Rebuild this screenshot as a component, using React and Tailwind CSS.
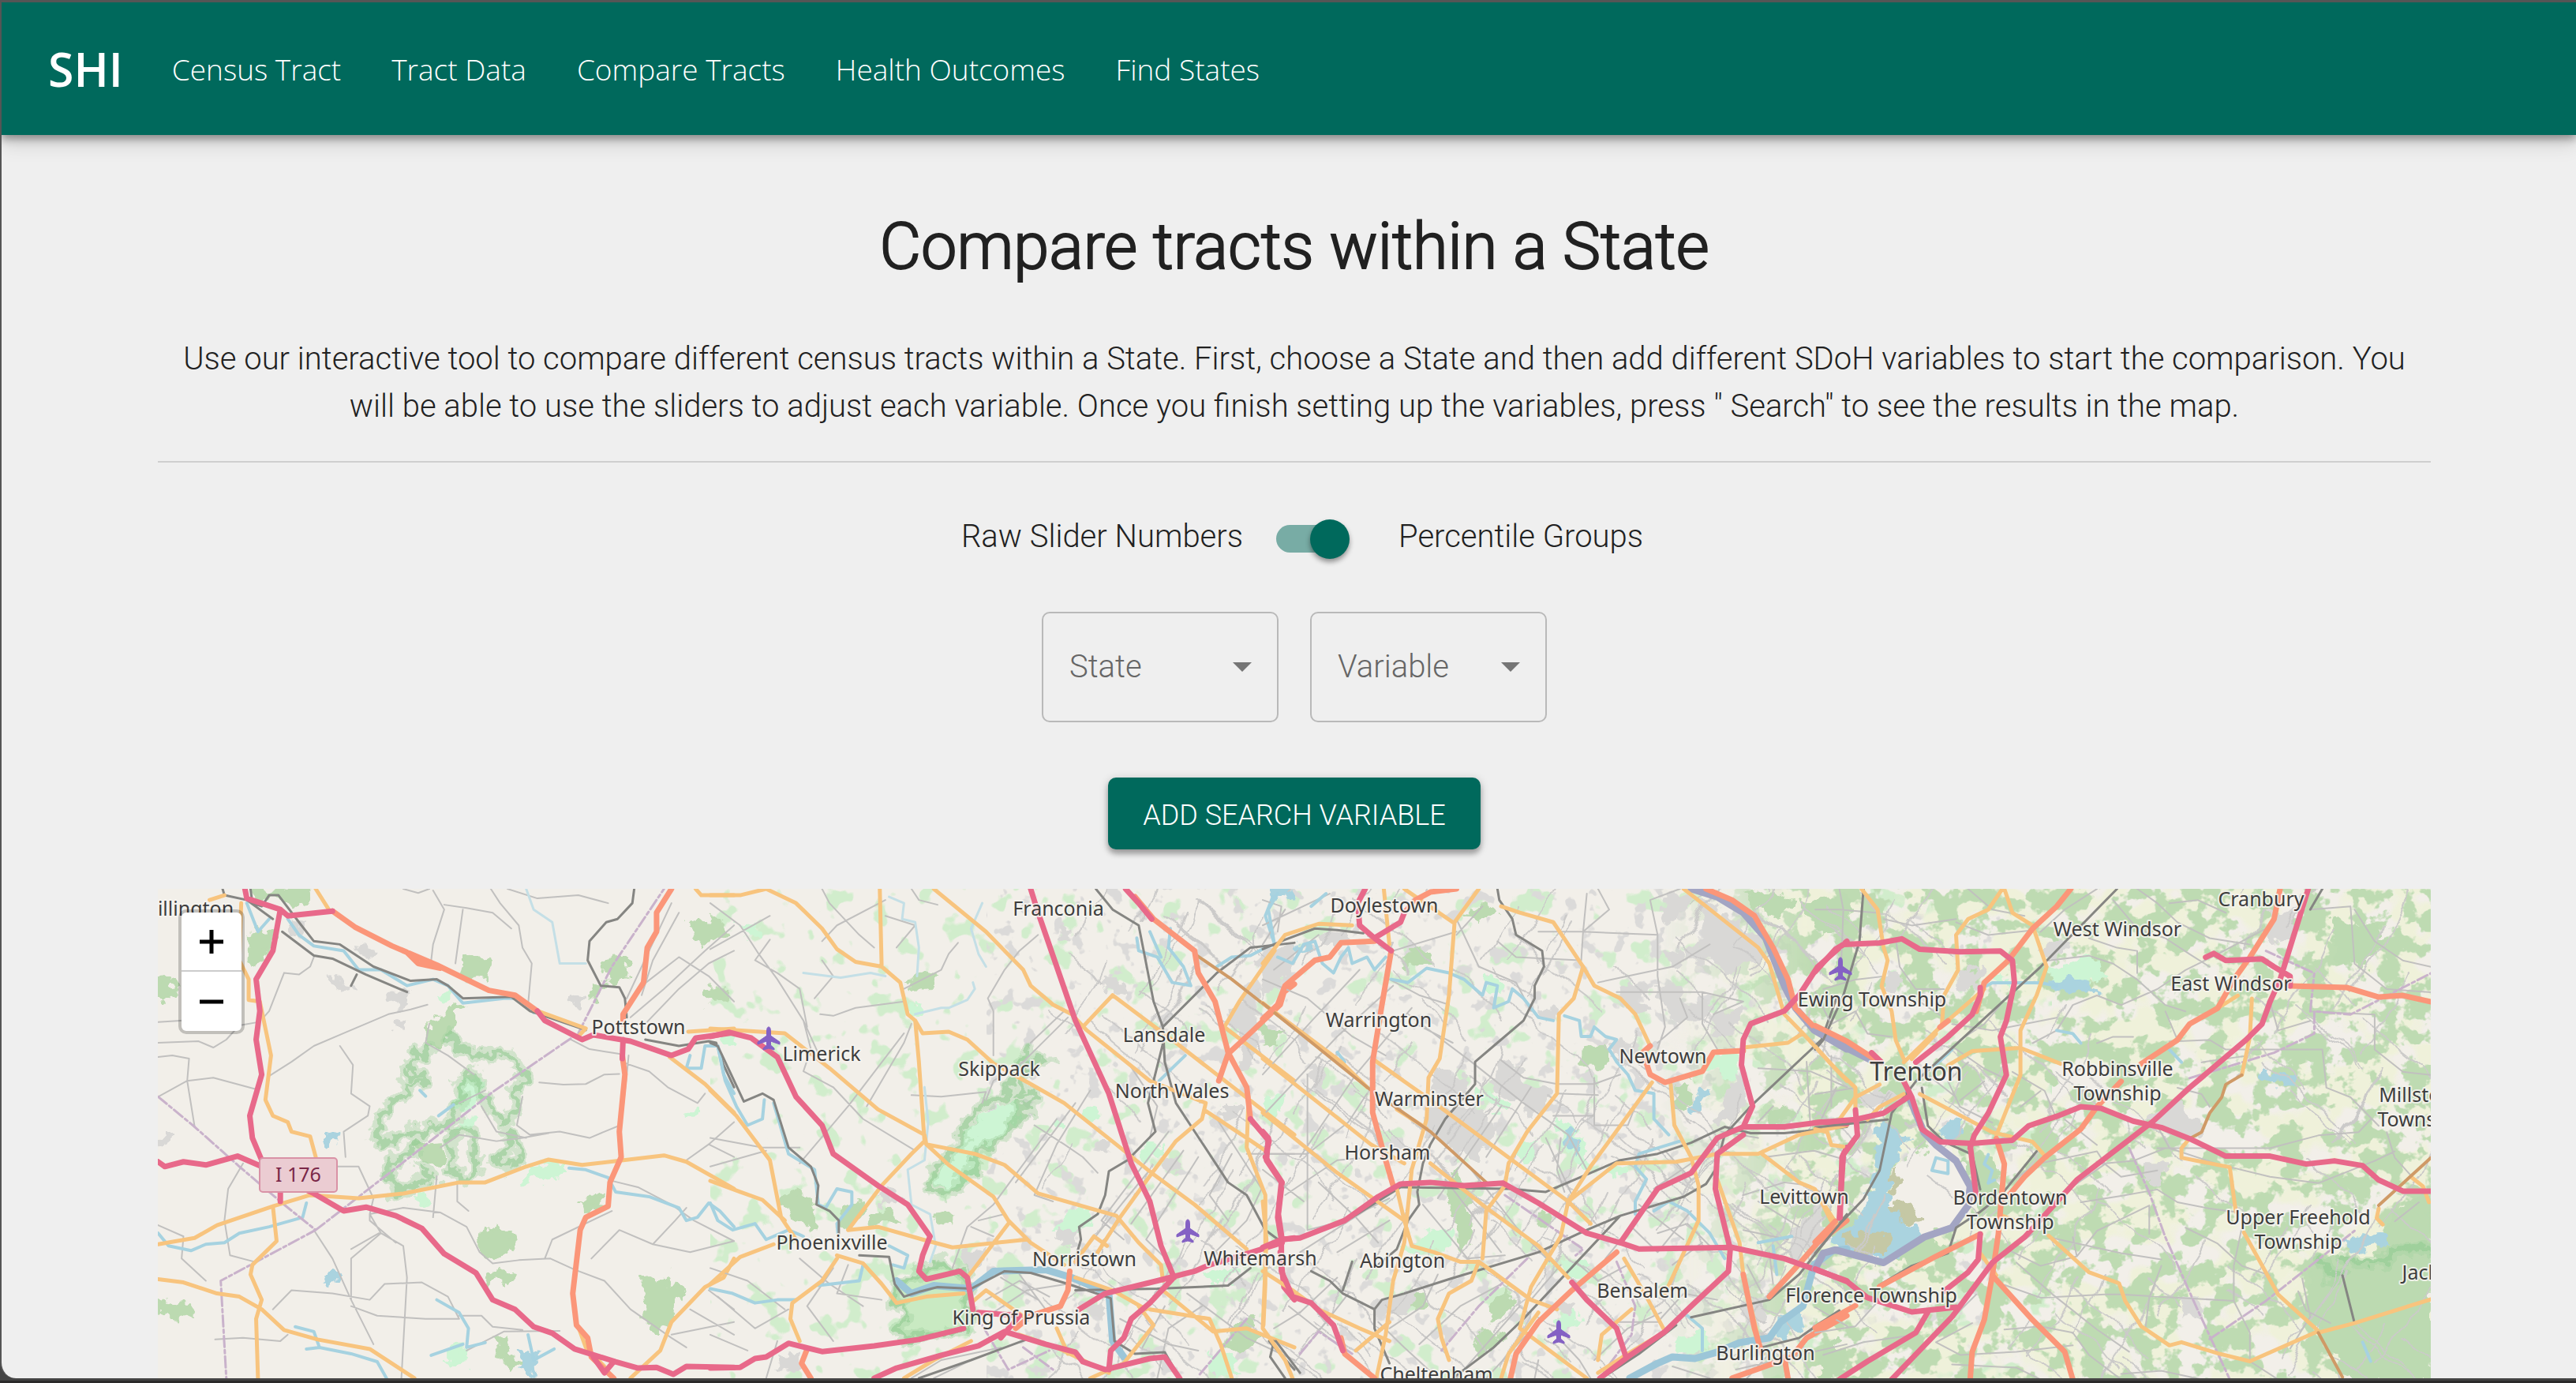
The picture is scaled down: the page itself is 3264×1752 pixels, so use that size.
import { useState } from "react";

const NAV = ["Census Tract", "Tract Data", "Compare Tracts", "Health Outcomes", "Find States"];

// Each map sheet holds its own local grid; strokes keep a constant width.
const SHEETS = [
  {
    place: "translate(-10 -6) scale(0.472 0.402)",
    woods: [
      "M270 15H420L410 60 380 85 340 25 290 60Z", "M255 160L330 150 325 190 285 260 262 220Z", "M850 235L910 232 918 262 908 300 842 285Z",
      "M820 375L845 380 815 430 800 490 750 508 752 440 790 415Z", "M22 300L50 295 70 330 50 365 22 360Z", "M1220 235L1275 232 1290 290 1230 320 1215 280Z",
      "M1485 335L1530 320 1550 345 1500 375Z", "M1160 1000L1215 978 1222 998 1165 1020Z", "M895 1100L925 1082 970 1098 978 1150 920 1190 885 1160Z",
      "M905 1245L935 1208 978 1240 955 1250 940 1240 910 1275Z", "M1325 1230L1360 1255 1390 1220 1400 1270 1445 1285 1400 1320 1415 1370 1370 1420 1340 1405 1350 1370 1322 1370 1345 1320 1320 1280Z",
      "M22 1310L60 1320 112 1322 105 1355 70 1378 40 1345 22 1340Z", "M920 1430L955 1430 960 1490 1000 1515 970 1525 940 1480Z", "M715 820L780 815 785 880 740 875Z", "M1450 130L1540 110 1545 150 1480 190Z", "M1180 330L1220 320 1205 360 1175 355Z",
    ],
    edges: [
      "M750 508L735 540 710 530 715 560 695 580 700 605 740 600 738 620 690 630 695 660 650 685 620 730 625 770 605 790 625 820 670 800 690 775 730 790 745 765 790 770 815 740 825 700 840 685 830 640 845 610 870 605 885 640 905 670 920 720 945 755 970 740 980 690 990 620 1015 610 980 550 950 530 905 535 880 555 850 515 820 510 800 480",
      "M720 820L700 850 660 870 630 915 655 935 665 970 710 945 760 920 730 890", "M805 780L870 785 875 900 845 935 810 900Z", "M965 790L985 800 995 870 955 890 920 865 950 850Z",
    ],
    golf: ["M830 625L880 605 905 665 885 690 840 710 822 690Z", "M835 740L870 735 865 770 835 775Z", "M1025 890L1110 880 1118 915 1040 925 1003 938Z", "M800 1465L845 1460 842 1520 800 1515Z", "M700 985L740 975 750 1010 695 1005Z", "M1440 730L1470 705 1482 720 1445 740Z", "M775 345L800 335 805 360 785 365Z", "M1540 480L1568 480 1568 510 1545 505Z"],
    gray: ["M480 295L520 305 545 330 520 338 500 325Z", "M640 345L690 340 700 370 665 380 640 375Z", "M655 430L688 430 685 455 660 458Z", "M1130 365L1158 362 1155 392 1130 388Z", "M30 790L55 790 50 825 32 820Z", "M380 110L415 130 400 160 375 145Z", "M560 190L600 205 590 240 560 225Z"],
    lake: ["M460 800L475 785 495 800 500 810 470 822Z", "M456 1240L490 1222 510 1240 480 1266Z", "M990 1455L1015 1490 1045 1475 1030 1550 1000 1530Z"],
    minor: [
      "M22 435L90 430 M22 500L130 495 170 515 205 490 240 445 290 435", "M22 545L60 540 105 550 100 620 22 670", "M100 620L170 610 280 645", "M100 620L120 765",
      "M320 605L380 560 440 510 520 470 560 450 640 410 700 395 745 380", "M510 510L545 570 540 660 590 700 585 730 520 780 525 860", "M360 280L400 285 430 260 440 230 M360 280L320 400 305 420",
      "M755 240L760 190 790 80 760 20 M790 65L850 75 920 90 970 140 M820 250L840 80", "M915 15L940 60 990 130 1000 200 1025 250 1015 380", "M680 15L720 28 750 15 M960 15L1040 45 1150 35 1230 60",
      "M250 880L210 960 200 1060 215 1170 280 1190", "M22 1075L90 1110 85 1180 150 1250", "M500 890L560 890 600 990 590 1040 620 1100 680 1140 690 1240 675 1557",
      "M620 1100L540 1180 540 1310 600 1450 M615 1100L540 1150 M440 1090L490 1180 540 1310", "M590 1040L680 1020 780 1035 850 1080 885 1160 920 1195 990 1185 1075 1180 1140 1215 1220 1250 1290 1340 1400 1430 1440 1460",
      "M760 1050L770 920 M825 945L825 1000 855 1030", "M1045 625L1110 632 1170 630 1220 600 1260 598", "M1000 670L985 760 1020 790 1100 780 1180 800 1220 780 1262 760", "M870 600L800 540 740 500 750 440", "M830 690L900 650 M890 700L930 780 1010 800", "M780 830L830 790 930 810 1000 800 1070 785",
      "M1060 1180L1080 1120 1240 1030 M1185 1180L1260 1090 1350 1135 1450 1160 1568 1125", "M1350 1135L1410 1060 1440 1020", "M1240 935L1310 955 1400 1010 1460 1060 1568 1125", "M330 1340L380 1280 490 1290 590 1310 630 1260 730 1255 800 1300 830 1370 740 1370 610 1360 540 1330 M830 1360L890 1360 920 1395 1000 1405",
      "M850 1470L900 1440 950 1410 1100 1408 M175 1435L250 1430 350 1440 370 1420", "M1265 560L1340 590 1390 640 1470 690 1490 660", "M1568 370L1500 290 1420 230 1310 330", "M1290 420L1380 330 1490 210 1568 130 M1330 440L1420 330 1500 250 1568 210", "M1280 360L1400 60 M1320 350L1350 240 1420 90", "M1130 490L1180 520 1260 535", "M1285 540L1280 600 1265 760", "M1500 820L1568 860 M1568 750L1500 820 1440 870", "M1400 1420L1568 1380 M1450 1340L1568 1420 M1500 1280L1568 1340", "M590 1040L590 1060 660 1130",
    ],
    stream: ["M370 110L400 160 440 195 520 210 560 270 620 270 690 320 760 300 800 320 840 375 950 360 990 360 1030 405", "M260 60L290 150 320 110", "M22 1100L50 1140 110 1155 150 1135 200 1130 240 1100 320 1080 410 1050 420 1005", "M1125 895L1170 900 1230 925 1250 970 1340 985 1420 1020 1440 1060 1470 1050 1500 1005 1530 1030 1568 1080", "M390 1395L440 1410 455 1460 540 1480 610 1505 635 1557 M455 1460L420 1465", "M770 1310L830 1350 855 1400 850 1460 900 1445", "M755 1485L840 1450", "M1450 540L1440 580 1480 580 1490 510 1525 510 1540 600 1568 660", "M775 730L815 695 M725 650L740 668", "M1085 1465L1030 1500 1015 1420"],
    brook: ["M1010 15L1030 80 1080 120 1100 250 1170 250"],
    rail: ["M195 15L200 35 260 50 330 110 M270 15L275 60 300 70 320 35 345 35 400 120 440 180 510 190 600 260 700 305 770 300 800 320 840 360 970 355 1020 400 1170 460", "M355 150L440 225 490 235 580 285 690 340", "M540 320L555 285", "M1300 15L1295 60 1255 110 1225 120 1180 180 1175 240 1210 320 1260 325 1275 360 1280 420", "M1330 490L1420 510 1500 495 1520 500 1540 570 1568 640"],
    border: ["M22 670L120 765 240 890 360 1010 445 1090 190 1250 205 1557", "M445 1090L720 840 920 655 1150 470 1240 260 1380 15"],
    road2: ["M445 15L480 80", "M245 60L240 240 265 300 265 365 295 370 325 540 310 680 330 730 370 750 380 780 430 795 445 860", "M22 1135L120 1115 180 1075 330 1015 430 980 560 990 680 975 830 940 900 940 1010 890 1070 868 1160 885 1380 855 1440 875 1568 960", "M330 1015L340 1125 275 1200 270 1230 300 1310 285 1370 290 1557", "M22 1245L90 1255 180 1290 240 1300 300 1340 360 1405 450 1435 590 1465 710 1557", "M1030 395L1170 455 1150 480", "M1395 545L1490 630 1568 720", "M1568 1180L1540 1240 1490 1270 1400 1380 1370 1470 1290 1557", "M1150 1395L1170 1460 1220 1520", "M1465 15L1480 35 1568 35", "M1445 465L1568 455", "M160 50L200 35"],
    trunk: ["M490 85L550 135 650 195 770 255 910 335 980 350 1040 400", "M690 215L720 250 780 265", "M1400 15L1360 90 1360 150 1335 200 1325 310 1270 410 1270 440", "M1268 540L1275 600 1260 780 1265 860 1235 940 1230 1015 1170 1050 1155 1090 1135 1290 1145 1390 1175 1430 1185 1490 1245 1557"],
    motor: ["M255 15L260 45 350 80 370 100 490 85", "M350 80L330 210 285 300 295 400 285 490 300 600 268 730 275 800 300 870 350 950 350 1000", "M22 875L40 890 90 875 150 885 235 857 300 890 360 930 440 975 520 1030 580 1018 660 1045 730 1085 790 1165 875 1225 920 1310 980 1340 1030 1395 1080 1415 1140 1465 1250 1505 1310 1525 1360 1523 1405 1545 1440 1520 1568 1523", "M1040 400L1060 430 1160 490 1190 475 1290 495 1400 540 1445 520 1465 485 1568 468", "M1270 490L1268 550", "M1190 1490L1220 1540 1245 1505"],
  },
  {
    place: "translate(700 -6) scale(0.472 0.402)",
    woods: ["M525 310L560 290 605 300 580 330 540 335Z", "M0 325L50 330 40 365 0 370Z", "M180 990L240 970 280 1010 275 1090 210 1040Z", "M350 1030L410 1000 390 1060 350 1080Z", "M430 1040L470 1030 500 1060 440 1075Z", "M600 1040L650 1035 650 1065 605 1070Z", "M1400 1400L1450 1370 1480 1430 1420 1470 1390 1450Z", "M0 100L40 115 30 150 0 150Z"],
    edges: [
      "M850 515L835 560 800 640 795 670 740 690 685 755 690 790 630 860 600 900 595 960 625 985 665 960 680 920 715 900 715 850 790 790 830 735 825 690 860 705 880 670 850 655 820 670 840 610 860 560 905 550",
      "M500 1245L555 1240 600 1195 650 1200 690 1230 700 1400 520 1435 505 1400 525 1370 495 1310Z",
    ],
    golf: ["M800 690L825 690 825 735 790 780 715 840 715 900 665 960 625 970 605 930 640 870 690 800 720 740Z", "M970 1020L1025 1025 1020 1060 985 1100 920 1095Z", "M535 370L565 375 560 410 535 410Z", "M1005 720L1025 705 1045 725 1015 740Z", "M1330 1230L1420 1210 1400 1240 1350 1260Z", "M1160 830L1220 830 1200 870 1160 870Z", "M925 750L950 735 950 760Z", "M80 130L130 125 130 160 100 165Z", "M1340 1480L1400 1480 1420 1540 1350 1550Z", "M1500 700L1530 680 1530 720Z"],
    reserve: ["M500 1245L555 1240 600 1195 650 1200 690 1230 700 1400 520 1435 505 1400 525 1370 495 1310Z"],
    gray: ["M1510 210L1568 190 1568 300 1500 320Z", "M1430 360L1470 340 1460 560 1420 580Z", "M1390 430L1430 360 1430 450Z", "M1380 700L1425 700 1420 740 1380 750Z", "M940 1090L985 1090 985 1130 940 1140Z", "M450 980L490 960 510 990 460 1010Z", "M930 140L960 135 960 170 935 165Z", "M1050 300L1110 310 1120 350 1060 340Z", "M1230 870L1260 860 1255 905 1230 900Z", "M190 1490L240 1480 230 1530 185 1530Z", "M680 1170L735 1160 725 1210 690 1210Z", "M1000 1320L1060 1310 1050 1360 1010 1360Z", "M1040 815L1070 810 1070 845 1045 840Z"],
    lake: ["M1510 15L1560 15 1550 40 1520 50Z"],
    minor: [
      "M0 205L160 100 M0 60L80 130 130 220 180 300 250 430 300 560", "M300 15L320 60 400 160 440 200", "M160 175L120 240 180 280 240 330 260 450", "M295 410L330 415 390 390 520 370 M300 180L340 130 470 50 M300 240L330 290 280 360", "M540 15L560 50 610 65", "M470 100L550 130 500 200", "M665 185L640 220 620 270 520 330",
      "M880 160L830 210 790 270 745 360 760 400 760 540", "M950 400L860 500 M960 420L840 560 760 620 740 680", "M250 430L270 520 250 590 330 640", "M0 800L140 830 240 830 M0 890L150 840", "M540 665L620 670 740 655 730 690", "M330 640L410 740 550 840 M420 700L520 500 540 440", "M240 880L370 700 520 470", "M930 740L760 1010 690 1080 650 1210 M980 690L820 940", "M870 760L950 820 1000 860 1040 910", "M1020 650L930 820 870 980 920 1000", "M1120 560L1200 700 1180 800", "M700 1080L760 1110 M720 1060L790 1040", "M0 1210L100 1250 200 1340 M20 1300L120 1400 210 1340 M0 1420L100 1470", "M240 1180L320 1260 410 1330 M330 1210L260 1330 330 1440", "M370 1200L340 1290 460 1310", "M1230 780L1050 1060 1110 1120 M1270 840L1130 1070 M1310 860L1170 1120 1240 1200", "M1440 850L1568 850 M1400 850L1340 980 1390 1060", "M1360 740L1480 960 1440 1060 1330 1190", "M1000 1160L1110 1000 1180 900",
      "M740 1310L830 1250 910 1300 M760 1350L850 1280 960 1260 M780 1240L880 1310 M830 1230L900 1340", "M1100 1370L1230 1450 1310 1470 M1220 1330L1160 1460 M1280 1290L1440 1430 1568 1500", "M540 1557L620 1500 780 1460 M600 1557L700 1500 M150 1557L180 1440", "M1200 1557L1230 1400 1320 1330",
    ],
    stream: ["M20 510L40 620 70 700 100 760 140 740 145 680", "M170 690L210 850 280 900 290 1010 310 1020 340 960 380 970 380 1010 340 1070 345 1130", "M0 1005L20 1060 60 1090 120 1070 150 1120 210 1090 250 1110", "M0 1275L60 1290 120 1320 180 1310 230 1310 M290 1265L400 1250 410 1200", "M1145 170L1150 210 1200 230 1240 310 1290 320 1270 260 1230 200 1235 140", "M1180 150L1210 230 M1360 260L1400 230 1450 225 1490 200 1515 190 1490 100 1510 40", "M1275 540L1240 580 1205 620", "M480 1140L530 1170 520 1210 490 1200"],
    brook: ["M480 40L520 60 515 110 550 120 560 200 555 290 M250 280L350 295 430 280 470 290", "M550 410L620 390 640 390 690 365 710 330 705 310", "M730 60L700 140 720 220 740 260", "M575 640L585 750 575 870 530 900 540 1010 590 1040 605 1140 590 1190"],
    river: ["M500 1250L540 1290 600 1265 700 1275 760 1220 900 1215 970 1240 1070 1290 1080 1440 1110 1490"],
    rail: ["M0 500L20 510 60 610 90 685 140 660 170 680 210 830 270 890 290 950 285 1010 320 1030 345 1060 345 1110", "M400 1170L480 1175 495 1260 520 1300 560 1285 610 1270 700 1275 790 1220 860 1225 960 1260 1075 1305 1085 1440 1140 1480 1220 1475 1260 1557", "M1035 15L1080 80 1150 130 1190 370 1215 450 1220 560 1250 690 1390 940 1440 980 1490 1090 1530 1125", "M1215 450L1360 280 1450 200 1568 185", "M1220 480L1175 690 1195 780 1120 870 1070 905 1060 980 1040 1040 990 1080 995 1120 980 1180", "M980 1280L1200 1275 1390 1265 1450 1210", "M560 1557L700 1500 860 1430", "M1500 1440L1568 1530"],
    border: ["M730 1390L800 1530 910 1470 M840 1460L920 1530", "M1440 1370L1310 1550"],
    road2: ["M0 35L80 35 150 15 230 60 300 140 340 205 390 245 460 260 510 310 530 410 550 430 570 470 640 465 690 490 760 565 860 630 950 690 1100 830 1190 915 1300 1010 1440 1150", "M455 15L460 260", "M600 15L740 150 840 270 860 320 920 380 970 410 1010 460 1180 620 1330 690", "M0 455L200 470 320 580 450 710 575 790 580 820 710 850 790 885 880 975 1090 1045 1150 1130 1210 1200 1215 1250", "M550 430L560 560 575 810 540 850 460 950 370 1090 450 1080 570 1120 650 1145 850 1120", "M580 820L640 885 760 985 800 1060 860 1130 950 1200", "M800 1070L690 1240", "M0 650L70 730 160 870 190 1050 230 1120", "M0 935L80 970 140 995 200 1060", "M1000 450L1080 350 1250 500 1568 790", "M1330 690L1320 740 1250 810 1180 920 1100 1050 1040 1160", "M1030 1110L980 1190 M1030 1110L1065 1140", "M1330 715L1440 800 1490 840", "M1445 670L1440 830 1490 980 1490 1260 1485 1390", "M1515 210L1420 370 1380 450 1568 620", "M0 1260L80 1175 170 1135", "M340 1180L300 1250 220 1320 215 1370 240 1440", "M340 1170L410 1195 460 1260 500 1320 580 1300 680 1290", "M700 1320L740 1280 850 1370", "M830 1420L930 1460 1070 1540 M930 1400L960 1480", "M1180 1340L1340 1370 1370 1450 1400 1557 M1215 1280L1350 1410 1440 1400 1568 1460", "M1150 1330L1190 1390 1110 1510 1020 1557", "M700 1440L600 1500 520 1557", "M980 1240L1080 1280 1170 1340"],
    brown: ["M1300 220L1400 300 1568 455"],
    trunk: ["M1140 40L1190 110 1300 210", "M1300 210L1310 280 1355 370 1390 530 1440 640 1450 740", "M1568 315L1540 340 1530 380 1440 480 1390 535 1365 620", "M965 1220L960 1280 940 1330 860 1360 820 1400", "M260 1465L245 1510 270 1557"],
    motor: ["M0 480L50 467 110 485 180 545 230 670 300 760 330 850 450 950 530 1010 590 1110 570 1170 560 1220 580 1245 670 1220 690 1240 705 1340", "M860 15L880 90 980 430 1070 660 1130 880 1180 1000 1210 1140 1245 1240", "M1115 15L1150 60 1185 110", "M1450 740L1500 810 1490 860 1535 940 1525 1040 1535 1120 1568 1115", "M0 1525L80 1523 120 1495 150 1490 210 1447 300 1473 440 1455 560 1435 680 1400", "M440 1557L500 1525 620 1485 720 1455 790 1410 900 1450 980 1475 1000 1505 1060 1530 1180 1495 1220 1490 1260 1557", "M720 1350L830 1360 780 1430", "M990 1340L1060 1290 1200 1250 1300 1220 1340 1200 1440 1165 1535 1130", "M1240 1245L1180 1320 1130 1370 1110 1430 1075 1470 1070 1530", "M1530 1160L1540 1270 1568 1310"],
  },
  {
    place: "translate(1400 -6) scale(0.472 0.402)",
    woods: ["M550 100L600 60 630 90 570 130Z", "M390 210L440 200 450 240 380 260Z", "M870 510L920 500 940 560 880 580 860 560Z", "M520 900L550 980 560 1130 530 1150 500 950Z", "M1350 720L1400 695 1440 720 1380 750Z", "M640 560L690 590 660 640 620 610Z", "M570 1440L610 1390 640 1430 580 1490Z", "M620 1310L670 1270 660 1340 610 1370Z", "M370 1310L430 1290 420 1340Z", "M0 450L40 460 30 510 0 500Z", "M1110 640L1150 620 1140 700 1110 720Z", "M1290 30L1370 25 1420 60 1370 110 1340 80Z", "M1440 60L1568 30 1568 130 1500 160Z", "M1490 1490L1540 1440 1568 1500 1568 1557 1500 1557Z", "M740 1040L775 1040 770 1075 745 1070Z"],
    edges: [],
    golf: ["M390 1140L460 1090 500 1090 500 1140 430 1160Z", "M780 740L840 780 880 890 830 870Z", "M690 840L730 820 700 880Z", "M1110 1440L1180 1410 1190 1470 1120 1470Z", "M600 290L640 310 630 340 590 330Z", "M10 680L50 670 40 720 20 720Z", "M580 640L650 690 640 720 580 660Z", "M810 1190L880 1200 870 1240 820 1240Z", "M1200 540L1290 530 1270 610 1200 580Z", "M930 900L970 890 960 920Z", "M780 1370L840 1340 850 1390 800 1410Z"],
    gray: ["M470 570L550 620 540 680 450 650Z", "M640 555L690 590 720 640 770 660 730 730 650 670 610 620Z", "M450 700L560 700 640 760 570 870 440 780Z", "M960 330L1010 310 1030 400 970 390Z", "M1050 330L1120 330 1130 370 1200 380 1190 440 1100 420Z", "M1080 40L1150 40 1100 120 1070 110Z", "M1180 50L1340 180 1330 240 1240 280 1180 200Z", "M1270 600L1300 660 1270 740 1220 740Z", "M1200 410L1290 400 1260 470 1210 480Z", "M940 490L1010 520 1030 560 960 560Z", "M0 200L50 230 30 330 0 350Z", "M160 150L230 150 220 190 160 190Z", "M300 1320L420 1270 400 1340 310 1370Z", "M740 390L775 390 780 425 750 430Z", "M1420 1080L1500 1040 1510 1120 1430 1180Z", "M1290 1320L1350 1310 1340 1380 1300 1390Z", "M1140 200L1190 190 1180 250 1140 240Z", "M780 1330L830 1310 830 1360Z", "M120 580L160 570 150 640Z", "M1070 220L1130 210 1130 250 1080 250Z"],
    lake: ["M815 790L835 780 850 860 830 850Z", "M1140 720L1180 650 1200 650 1150 735Z", "M1520 1120L1568 1090 1568 1150Z", "M1370 1400L1440 1340 1450 1400 1390 1420Z", "M90 200L130 180 130 210Z"],
    minor: [
      "M410 440L510 500 M0 130L180 30 M0 300L120 360 240 480 330 540 M30 270L150 160", "M520 110L580 260 680 310 720 400", "M520 160L590 70 M630 180L680 230 850 240 M740 150L860 150 1060 160 M870 30L860 150 855 240", "M900 15L930 80 860 150 M1060 160L1040 50 1120 15", "M1060 160L1060 290 1080 450 1060 520", "M900 310L980 290 1100 260 1200 190 M950 340L1180 340 1290 370", "M1120 360L1140 420 1060 500 M1180 340L1180 440 1220 520 M1290 370L1210 410",
      "M390 410L560 560 700 690 820 790 870 900", "M640 555L700 610 790 630 890 630 960 600 M790 660L900 665 M780 730L890 730 M890 610L890 760 980 760 1000 700", "M760 800L830 980 M800 800L790 900 810 970", "M0 50L50 70 40 150 M0 190L60 80 M350 210L520 150 M340 300L420 350 500 380", "M350 320L200 480 0 730 M260 270L140 420 0 600 M400 390L250 600 100 860", "M0 850L120 850 230 750 280 660 M120 600L120 1090 M0 900L110 1000 M60 980L200 870 300 860", "M150 940L250 1050 310 1130 M120 1090L220 1060 340 990 M100 1160L300 1010 M200 1160L340 1060",
      "M640 700L540 870 470 990 M720 640L600 860 M560 900L680 1080 770 1190 M490 930L640 1160 M430 1010L550 1180 650 1170", "M310 1380L380 1460 470 1557 M200 1240L100 1350 30 1400 M230 1290L170 1380 100 1480 M70 1330L210 1460", "M340 1400L430 1330 470 1230 M420 1450L530 1330 640 1260 M520 1557L690 1330 M600 1557L700 1430 820 1290", "M600 1210L720 1310 800 1200 M840 1190L900 1250 980 1200 M920 1180L990 1080 1060 1160 1150 1030",
      "M1060 1100L1140 1070 1200 1140 M1100 1200L1180 1130 M1010 1010L1130 1120 M1150 880L1050 960 M1080 840L1150 930", "M1230 780L1330 800 M1350 860L1480 840 1568 870 M1330 1000L1440 1080 M1290 980L1400 940 1470 950", "M1330 580L1470 590 1568 640 M1370 700L1330 750 M1460 560L1470 760 M1540 640L1500 740", "M1300 1200L1340 1290 M1360 1160L1370 1260 M1290 1090L1410 1120 M1480 960L1568 1010", "M730 1557L740 1500 M770 1400L850 1500 880 1557 M890 1500L980 1400 1070 1350", "M950 1380L1060 1380 1130 1290 1220 1310", "M1270 1530L1568 1450 M1100 1520L1200 1557 M1300 1557L1360 1480",
    ],
    stream: ["M40 30L15 80 30 180 M40 230L80 250 110 190 140 180 160 250 190 280 210 230 230 200 240 250 280 230 300 270 330 230", "M345 300L390 310 440 265 500 280 540 300 590 350 600 310 630 320 620 390 660 370 670 330 700 360 740 420 780 430", "M810 415L850 430 855 480 880 480 890 450 920 480 950 490 930 520 950 560 980 600 1000 650 1050 660 1050 740 1090 790", "M1120 810L1010 850 1000 890 1030 930 1000 1000 1000 1040 M1050 1030L1090 1000 1140 1030 1200 1100 1240 1180", "M1330 1130L1420 1110 M1370 1140L1380 1230", "M1140 1360L1180 1400 1180 1470", "M130 70L170 30 M200 530L220 560"],
    river: ["M985 1557L1060 1510 1100 1490 1160 1495 1220 1475 1280 1445 1360 1430 1390 1380 1450 1330 1480 1200 1530 1155 1568 1150"],
    delaware: ["M1150 15L1220 40 1290 90 1350 170 1400 320 1430 390 1480 460 1568 520"],
    rail: ["M0 205L60 175 140 140 200 145 270 155", "M630 15L635 50 670 110 680 160 750 210 755 260 730 320 730 360 700 430 630 500 570 560 570 630 490 740 450 820 430 880 415 970 420 1010 390 1060 360 1150 310 1200 M240 1190L215 1280", "M130 1220L180 1250 215 1290 300 1340 300 1400 340 1510", "M300 1340L320 1310 380 1290 500 1245 740 1160 860 1095 960 1045 1130 985 1190 945 1215 900 1240 790 1310 700 1500 490 1540 360", "M1568 765L1400 785 1310 785 1240 765 1150 815 1060 850 960 870 880 910 760 970 660 960 370 955 240 1050 120 1110", "M960 1045L700 1370 620 1460 510 1557", "M1568 1040L1440 1230 1360 1310 1150 1365 M1568 1340L1500 1380 1440 1430 1340 1460", "M910 1557L1010 1480 1110 1390", "M30 1440L20 1490 60 1557 M35 1440L100 1540"],
    border: ["M650 980L860 1150 840 1170", "M710 1180L580 1330 480 1470", "M950 1190L1000 1330 990 1420 920 1530 M100 1480L150 1410 240 1480"],
    road2: ["M0 250L60 160 150 125 240 130", "M580 15L515 120 500 350 475 550 445 610 440 740 400 900 380 1130 350 1250 330 1420 305 1557", "M380 15L510 120 M325 15L340 190", "M640 70L690 90 780 120 860 260 890 320 960 360 1000 410 1040 510", "M860 260L835 360 795 410 790 660 710 780 660 880 650 950 600 1030 590 1180", "M1130 15L1190 70 1330 200 1360 250 1400 410 1450 470 1520 560 1568 620", "M1290 515L1410 500 1450 470", "M1045 625L880 890 820 1000", "M1095 630L1105 760 1150 860 1170 950 1170 1060 1080 1290", "M0 375L210 560 280 640 M0 550L290 820 380 880", "M300 555L450 680 820 1000 880 1070 M360 710L440 770", "M0 720L200 910 380 1060 400 1140 460 1160 530 1190 580 1190 720 1310 790 1340", "M450 880L600 1020 740 1140 820 1240", "M820 1000L950 880 1110 875 1220 850 1330 850 1440 790 1568 760", "M1340 850L1440 940 1480 960 1540 1070", "M1220 930L1280 1130 1290 1230 1330 1430", "M820 1000L800 1110 720 1270 690 1400 870 1557", "M970 1180L1030 1300 1080 1410 980 1480 900 1540", "M580 1190L560 1250 500 1290 470 1370 480 1430 500 1500", "M0 1220L80 1280 150 1340 260 1400 340 1440 M340 1380L250 1470", "M360 960L380 1060 M0 1000L10 1120 0 1400 60 1500 80 1557", "M640 1557L660 1480 740 1350 M990 1340L910 1420 900 1500"],
    brown: ["M0 375L280 640 450 780 600 940"],
    trunk: ["M520 15L450 25 410 50 380 90", "M0 425L40 380 60 320 140 240 180 230 210 185 300 180", "M345 210L320 380 295 560 295 720 330 870 350 950", "M1190 15L1260 50 1320 100 1370 200 1410 300 1430 390 1480 450 1568 500", "M1040 510L1020 530 1040 600 1080 625 1180 590 1210 530 1290 525", "M950 1160L830 1280 740 1380 680 1480 665 1557", "M1568 1060L1490 1130 1430 1210 1360 1300", "M1290 1230L1320 1400 1340 1480 M210 1430L220 1480 300 1557", "M1568 1360L1460 1430 1420 1490 1260 1557", "M1400 1490L1410 1557"],
    motor: ["M275 15L255 60 260 130 300 170 370 120 380 90", "M300 170L345 210", "M0 780L15 800 10 870 50 940 40 1050 50 1120 100 1115 220 1060 310 985 370 945 450 940 540 950 645 942 740 1005 870 1100 960 1130 1010 1150 1260 1145 1400 1180 1568 1250", "M0 1145L50 1120 50 1220 80 1300 130 1320 190 1390 215 1470", "M960 1130L1060 960 1150 910 1220 800 1290 765 1400 765 1500 750 1568 755", "M1290 765L1315 700 1285 570 1290 490 1310 440 1400 400 1440 350 1490 260 1568 180", "M1290 790L1220 850 1215 960 1255 1150 1250 1220 1150 1330 1080 1410 980 1490 905 1557", "M830 1255L870 1310 950 1400 975 1490", "M1568 830L1555 860 1550 1050"],
  },
  {
    place: "translate(2100 -6) scale(0.51 0.403)",
    woods: ["M1250 1190L1290 1165 1340 1185 1410 1190 1430 1160 1500 1130 1530 1160 1530 1557 1320 1557 1260 1410 1210 1340 1240 1200Z", "M1430 1040L1530 950 1530 1180 1400 1170Z", "M1290 110L1390 130 1410 200 1360 260 1290 230Z", "M390 860L440 850 460 980 410 1040 395 980Z", "M200 1170L280 1110 330 1150 260 1190Z"],
    edges: ["M1310 1175L1350 1190 1410 1190 1430 1160 1500 1130 1530 1160", "M1255 1180L1280 1235 1310 1225"],
    golf: ["M580 270L700 230 720 290 600 320Z", "M440 300L470 290 470 320Z"],
    gray: ["M550 200L620 180 600 240 580 230Z", "M820 740L900 690 960 760 940 800 850 760Z", "M820 880L880 880 850 950 820 940Z", "M910 1300L950 1300 960 1350 920 1370Z", "M100 690L160 640 210 670 150 700Z", "M360 290L420 240 400 320 350 330Z", "M1130 90L1200 80 1190 160 1130 180Z", "M0 985L20 1000 0 1110Z", "M180 290L210 280 200 340 180 330Z"],
    lake: ["M160 760L230 790 200 850 180 960 200 1010 290 1080 270 1110 180 1180 60 1150 50 1100 110 1050 150 930Z", "M580 310L640 290 710 340 660 330 600 330Z", "M1100 590L1190 610 1180 630 1110 620Z", "M310 760L360 750 360 790 320 800Z", "M1310 1120L1400 1100 1420 1130 1340 1150Z"],
    island: ["M230 850L330 830 375 920 380 1030 340 1080 260 1090 190 1010 200 900Z"],
    scrub: ["M190 1010L240 1000 260 1070 210 1050Z", "M80 1100L180 1100 180 1160 120 1160 75 1140Z", "M185 920L205 900 200 970 190 970Z"],
    minor: [
      "M60 15L70 80 65 240 M0 80L60 80 150 90 M170 110L240 130 350 110 M20 330L100 300 170 290 M180 350L260 370 320 420", "M100 400L130 470 190 480 M200 170L210 260 250 330 320 330", "M380 15L440 80 520 100 M350 120L430 160 540 145", "M560 150L620 80 700 15 M580 240L680 225 740 250 800 300 870 380 920 400", "M540 500L600 460 640 380 700 350 760 380 850 330 920 270 1000 220 1120 140", "M680 170L750 200 800 210 800 280 M740 50L800 140 870 170 930 220 980 260", "M800 15L850 60 900 120 980 170 1080 190 M880 60L950 50 1020 90", "M1230 80L1330 70 1340 250 1420 330 1530 340 M1340 80L1390 180 1460 240 1530 260", "M1230 400L1390 410 1390 520 1460 590 1530 600 M1130 370L1150 460 1230 430", "M880 495L980 490 1020 520 1260 520 1270 640 1330 670 1400 760 M900 490L870 400", "M340 440L440 460 520 440 600 420 M380 560L330 620 360 700 440 750 M280 600L350 670 M490 590L570 650 600 740 M510 700L560 650", "M340 510L420 580 470 610 M360 680L420 620 M460 380L420 440 360 490", "M850 760L880 830 1000 880 1130 920 1250 940 1390 870 1440 840 M850 830L1130 830 1250 790 1350 780 1380 740", "M700 880L790 870 870 830 M640 950L720 880 760 920 850 900 M720 880L700 840 550 880 480 940", "M540 1100L480 1150 560 1200 650 1170 640 1110 M580 1110L760 1160 860 1180 M500 1190L590 1290 700 1400 780 1470", "M470 1260L560 1300 720 1290 760 1290 900 1300 1040 1310 M650 1170L700 1090 830 1010 830 1100", "M660 1000L760 980 850 960 900 1000 980 1020 1040 1030 M920 1080L1000 1130 1060 1200 1130 1230", "M860 1200L830 1300 820 1400 M1060 1080L1040 1200 1040 1310 1080 1410 1080 1500 M1210 1240L1230 1360 1180 1460", "M390 1380L300 1440 360 1480 500 1470 640 1450 M400 1290L320 1390 M470 1400L560 1390 640 1410 680 1480 760 1557", "M20 1480L120 1440 230 1420 M0 1410L100 1390 150 1320 M340 1510L500 1520 560 1557", "M100 640L0 660 M40 540L40 700 M0 340L40 440 100 400", "M960 1557L860 1530 760 1540 M1080 1500L1150 1557", "M1420 780L1440 860 1490 930 M1500 1000L1440 1060 M1280 1380L1220 1340 1200 1280 M0 1330L80 1390",
      "M960 560L1070 540 M700 500L740 480 790 480 M620 740L700 820 M900 640L960 660 980 700",
    ],
    stream: ["M410 330L440 310 500 310 560 310 600 320", "M880 520L910 560", "M430 850L420 880 440 900 430 940 445 930 M300 860L290 900 330 910 330 870Z", "M1380 1500L1360 1440 M290 580L340 520", "M600 460L640 470 660 500"],
    delaware: ["M0 460L70 510 150 560 M230 660L270 780 300 820 350 870 385 950 380 1010 340 1080 270 1110 170 1190 50 1150 20 1160 0 1210"],
    rail: ["M750 15L560 260 250 620 190 720 160 900 120 990 60 1070 0 1160", "M120 15L110 180 70 350 20 490 0 520", "M180 740L0 765", "M265 640L280 760 320 810 390 850 410 960 M410 1030L350 1080 330 1160 240 1200 160 1260 M60 1340L0 1390", "M550 840L460 980 400 1040", "M1260 15L1230 80 M1310 1230L1340 1380"],
    border: ["M780 830L830 970 870 1110 940 1310 1030 1557", "M980 1430L1120 1310 1340 1090 M930 610L1140 530 1240 470 1240 400 1330 410 1530 280", "M1230 400L1240 280 1120 210"],
    road2: ["M115 15L155 80 170 200 180 240 165 320 190 400 200 490 220 550", "M465 15L430 80 380 110 350 160 355 270 320 350 315 440", "M470 15L490 90 540 130 575 260 550 350 510 460 510 600 450 790", "M0 510L50 580 100 640 100 740", "M420 330L310 450 220 560 M300 470L240 550", "M330 570L390 525 510 515 610 565", "M260 660L440 780 540 810 575 860", "M220 660L160 700 130 740 M0 770L30 780 40 820 70 825 M160 630L100 670 60 740", "M1085 360L1080 480 1060 600", "M930 800L910 830 910 860 1030 890 1045 1030 M1065 1095L1150 1290 1250 1405 1080 1500 1000 1475 910 1440 880 1450 810 1390 770 1310 755 1255 680 1220 580 1105", "M1250 1410L1340 1380 1530 1305", "M1400 1020L1395 1050 1410 1070 M1480 920L1510 950 1525 1000", "M0 960L40 1060 M410 1160L450 1230 M460 1040L500 1060", "M1050 350L1000 390"],
    brown: ["M1060 600L1020 630 1010 670 980 720 960 780 930 800", "M1530 860L1400 1010", "M1250 1410L1310 1550"],
    trunk: ["M635 15L600 70 540 140 480 240 420 310 400 400", "M1155 15L1140 110 1080 230 1040 300 1000 390 930 440 900 490 810 565", "M760 620L700 700 660 770 570 860 520 920 480 980", "M1180 320L1320 325 1400 355 1460 350 1530 370", "M0 445L80 495 160 560", "M450 800L470 880 455 1100 440 1230 420 1370 390 1470 385 1557", "M440 1230L540 1370 620 1470 640 1557", "M410 1100L300 1170 160 1265 M100 1325L0 1395", "M310 450L330 430", "M50 1060L0 1125"],
    motor: ["M0 275L50 205 70 190 160 185 215 172 260 205 360 213 460 210 490 240 495 310 475 430 460 480 475 600 430 720 395 790 385 830", "M410 325L410 350 390 410 330 480 250 560 M140 530L165 560 M220 620L240 670 265 770 310 810 390 815 490 805 530 760 600 730 660 700 710 705 790 745 860 765 930 800 1020 855 1130 855 1220 880 1290 870 1360 885 1400 930 1460 965 1530 965", "M1225 15L1155 300 1130 370 1110 440 1070 490 930 640 840 745 650 930 520 1110 440 1190 340 1360 190 1557", "M970 230L990 218 1020 240 1110 235 1140 260 1180 290 1180 320", "M385 820L400 980 M410 1100L405 1180 380 1220 320 1280", "M0 750L100 740 170 720 230 670", "M100 710L105 790 70 850 60 1050", "M0 1210L80 1250 130 1300 240 1345 350 1330 M280 1345L250 1410 130 1500 60 1557"],
  },
];

// Town labels: text lines, centre x, first baseline, size.
const TOWNS = [
  [["illington"], 48, 34, 25], [["Pottstown"], 609, 184, 25], [["Limerick"], 841, 218, 25], [["Franconia"], 1141, 34, 25],
  [["Skippack"], 1066, 237, 25], [["Lansdale"], 1275, 194, 25], [["North Wales"], 1285, 265, 25], [["Phoenixville"], 854, 457, 25],
  [["Norristown"], 1174, 478, 25], [["King of Prussia"], 1094, 552, 25], [["Whitemarsh"], 1397, 477, 25], [["Doylestown"], 1554, 30, 25],
  [["Warrington"], 1547, 175, 25], [["Warminster"], 1611, 275, 25], [["Horsham"], 1558, 343, 25], [["Abington"], 1577, 480, 25],
  [["Cheltenham"], 1620, 624, 25], [["Newtown"], 1907, 221, 25], [["Bensalem"], 1881, 518, 25], [["Levittown"], 2086, 399, 25],
  [["Burlington"], 2037, 597, 25], [["Ewing Township"], 2172, 149, 25], [["Trenton"], 2228, 243, 32], [["West Windsor"], 2483, 60, 25],
  [["Cranbury"], 2665, 22, 25], [["East Windsor"], 2627, 129, 25], [["Robbinsville", "Township"], 2483, 237, 25], [["Bordentown", "Township"], 2347, 400, 25],
  [["Florence Township"], 2171, 524, 25], [["Upper Freehold", "Township"], 2712, 425, 25], [["Millstone", "Township"], 2868, 270, 25], [["Jackson"], 2888, 495, 25],
];

const PLANES = [[774, 190], [1305, 434], [1775, 562], [2132, 102]];

const LINES = [
  ["minor", "#c1c0bf", 2], ["brook", "#c4dfe6", 3], ["stream", "#a6d2e0", 4], ["river", "#9cc6d8", 9], ["delaware", "#a3a5c3", 9], ["border", "#c9b2cb", 3],
  ["rail", "#858582", 3], ["road2", "#f8c47e", 5], ["brown", "#cf9a66", 4], ["trunk", "#fb9679", 7], ["motor", "#e8698a", 7],
];

const AREAS = [["woods", "#bcdab1"], ["reserve", "#c9eac2"], ["golf", "#cdf5d4"], ["gray", "#d9d8d6"], ["lake", "#aad3df"], ["island", "#f2efe9"], ["scrub", "#c5c8a5"]];

function Strokes({ sheet }) {
  return (
    <>
      {LINES.map(([kind, color, width]) => (
        <path
          key={kind}
          d={(sheet[kind] || []).join("")}
          stroke={color}
          strokeWidth={width}
          strokeDasharray={kind === "border" ? "14 4 4 4" : undefined}
          vectorEffect="non-scaling-stroke"
        />
      ))}
    </>
  );
}

// Local streets: short two-part lines that follow the region's diagonal grid.
function streetGrid(left, width, count, start) {
  let seed = start;
  const rand = () => {
    seed = (seed * 16807) % 2147483647;
    return seed / 2147483647;
  };
  let d = "";
  for (let i = 0; i < count; i++) {
    const x = left + rand() * width;
    const y = rand() * 620;
    const len = 30 + rand() * 90;
    const along = i % 2 === 0;
    const dx = along ? len * 0.8 : len * 0.55;
    const dy = along ? len * 0.62 : -len * 0.78;
    d += `M${x.toFixed()} ${y.toFixed()}l${dx.toFixed()} ${dy.toFixed()}l${(dx * 0.3).toFixed()} ${(dy * 0.5).toFixed()}`;
  }
  return d;
}

const STREETS = streetGrid(1120, 1000, 200, 7) + streetGrid(2100, 760, 90, 19);

function RoadMap() {
  return (
    <svg viewBox="0 0 2880 620" preserveAspectRatio="xMidYMin slice" className="block h-full w-full" role="img" aria-label="Road map around Philadelphia and Trenton">
      <defs>
        <filter id="forest" x="0" y="0" width="1" height="1" colorInterpolationFilters="sRGB">
          <feTurbulence type="fractalNoise" baseFrequency="0.032 0.036" numOctaves="4" seed="4" />
          <feColorMatrix values="0 0 0 0 0.745  0 0 0 0 0.86  0 0 0 0 0.7  16 0 0 0 -7.9" />
        </filter>
        <filter id="meadow" x="0" y="0" width="1" height="1" colorInterpolationFilters="sRGB">
          <feTurbulence type="fractalNoise" baseFrequency="0.018" numOctaves="3" seed="11" />
          <feColorMatrix values="0 0 0 0 0.937  0 0 0 0 0.945  0 0 0 0 0.855  10 0 0 0 -4.4" />
        </filter>
        <filter id="parks" x="0" y="0" width="1" height="1" colorInterpolationFilters="sRGB">
          <feTurbulence type="fractalNoise" baseFrequency="0.03" numOctaves="3" seed="21" />
          <feColorMatrix values="0 0 0 0 0.82  0 0 0 0 0.93  0 0 0 0 0.8  0 16 0 0 -9.8" />
        </filter>
        <filter id="built" x="0" y="0" width="1" height="1" colorInterpolationFilters="sRGB">
          <feTurbulence type="fractalNoise" baseFrequency="0.045" numOctaves="3" seed="31" />
          <feColorMatrix values="0 0 0 0 0.86  0 0 0 0 0.855  0 0 0 0 0.85  16 0 0 0 -9.9" />
        </filter>
        <filter id="ragged" x="0" y="0" width="1" height="1" colorInterpolationFilters="sRGB">
          <feTurbulence type="fractalNoise" baseFrequency="0.06" numOctaves="3" seed="5" result="n" />
          <feDisplacementMap in="SourceGraphic" in2="n" scale="26" xChannelSelector="R" yChannelSelector="G" />
        </filter>
        <filter id="winding" x="0" y="0" width="1" height="1" colorInterpolationFilters="sRGB">
          <feTurbulence type="fractalNoise" baseFrequency="0.025" numOctaves="2" seed="9" result="n" />
          <feDisplacementMap in="SourceGraphic" in2="n" scale="22" xChannelSelector="R" yChannelSelector="G" />
        </filter>
        <linearGradient id="fadeIn">
          <stop offset="0" stopColor="#000" />
          <stop offset="0.2" stopColor="#fff" />
        </linearGradient>
        <mask id="east">
          <rect x="1900" width="980" height="620" fill="url(#fadeIn)" />
        </mask>
      </defs>
      <rect width="2880" height="620" fill="#f2efe9" />
      <rect x="700" width="1700" height="620" filter="url(#parks)" />
      <rect x="1050" width="1300" height="620" filter="url(#built)" />
      <g mask="url(#east)">
        <rect x="1900" width="980" height="620" filter="url(#meadow)" />
        <rect x="1900" width="980" height="620" filter="url(#forest)" />
      </g>
      <g fill="none" strokeLinejoin="round" strokeLinecap="round">
        <g filter="url(#ragged)">
          <path d="M-20 -20H2920V660H-20Z" />
          {SHEETS.map((s) => (
            <g key={s.place} transform={s.place}>
              {AREAS.map(([kind, color]) => (
                <path key={kind} d={(s[kind] || []).join("")} fill={color} stroke={color} strokeWidth="3" vectorEffect="non-scaling-stroke" />
              ))}
              <path d={s.edges.join("")} stroke="#a3d3a0" strokeOpacity="0.4" strokeWidth="17" vectorEffect="non-scaling-stroke" />
              <path d={s.edges.join("")} stroke="#93cb93" strokeOpacity="0.6" strokeWidth="7" vectorEffect="non-scaling-stroke" />
            </g>
          ))}
        </g>
        <g filter="url(#winding)">
          <path d="M-20 -20H2920V660H-20Z" />
          <path d={STREETS} stroke="#cbcac9" strokeWidth="2" />
        </g>
        {SHEETS.map((s) => (
          <g key={s.place} transform={s.place}>
            <Strokes sheet={s} />
          </g>
        ))}
      </g>
      {PLANES.map(([x, y]) => (
        <path
          key={x}
          transform={`translate(${x} ${y})`}
          d="M0 -15C2 -15 2.500 -12 2.500 -9V-4L14 4V7L2.500 3V8L7 12V14L0 12L-7 14V12L-2.500 8V3L-14 7V4L-2.500 -4V-9C-2.500 -12 -2 -15 0 -15Z"
          fill="#8461c4"
          stroke="#8461c4"
        />
      ))}
      <rect x="129" y="341" width="98" height="43" rx="4" fill="#ebccd2" stroke="#d992a6" strokeWidth="2" />
      <g fontFamily='"Noto Sans", "Open Sans", sans-serif' textAnchor="middle" fill="#3d3d3d">
        <text x="178" y="371" fontSize="25" fill="#7a2748">I 176</text>
        {TOWNS.map(([lines, x, y, size]) => (
          <text key={lines.join(" ") + x} fontSize={size} stroke="#f6f4f0" strokeOpacity="0.85" strokeWidth="4" paintOrder="stroke" strokeLinejoin="round">
            {lines.map((line, i) => (
              <tspan key={line} x={x} y={y + i * 31}>{line}</tspan>
            ))}
          </text>
        ))}
      </g>
    </svg>
  );
}

function Picker({ label, options }) {
  const [value, setValue] = useState("");
  return (
    <div className="relative h-[140px] w-[300px]">
      <select
        aria-label={label}
        value={value}
        onChange={(e) => setValue(e.target.value)}
        className="h-full w-full appearance-none rounded-[10px] border-2 border-[#b9b9b9] bg-transparent px-[33px] text-[40px] font-light text-[#666]"
      >
        <option value="">{label}</option>
        {options.map((o) => (
          <option key={o}>{o}</option>
        ))}
      </select>
      <svg viewBox="0 0 24 12" className="pointer-events-none absolute right-[34px] top-[64px] h-3 w-6" aria-hidden="true">
        <path d="M0 0H24L12 12Z" fill="#757575" />
      </svg>
    </div>
  );
}

export default function App() {
  const [percentile, setPercentile] = useState(true);
  return (
    <div className="flex h-screen flex-col overflow-hidden border-b-3 border-[#2b2a2a] bg-[#444] font-[Roboto,sans-serif] text-[#212121]">
      <div className="mb-[3px] flex min-h-0 flex-1 flex-col overflow-hidden rounded-bl-[20px] border-l-2 border-t-3 border-[#555] bg-[#efefef]">
        <header className="relative flex h-[168px] shrink-0 items-center bg-[#00695c] px-[59px] font-['Open_Sans',sans-serif] text-white shadow-[0_5px_10px_rgba(0,0,0,0.35),0_10px_24px_rgba(0,0,0,0.15)]">
          <a href="#home" className="mr-[62px] text-[59px] font-semibold leading-none">SHI</a>
          <nav className="flex gap-[64px] text-[37px] font-light leading-none">
            {NAV.map((item) => (
              <a key={item} href="#top" className="whitespace-nowrap">{item}</a>
            ))}
          </nav>
        </header>

        <main className="flex min-h-0 flex-1 flex-col items-center pl-[198px] pr-[184px] pt-[88px]">
          <h1 className="text-[81px] font-light leading-[108px] [-webkit-text-stroke:2px_#212121]">Compare tracts within a State</h1>
          <p className="mt-[58px] w-full border-b-2 border-[#cfcfcf] pb-[39px] text-center text-[40px] font-light leading-[60px]">
            Use our interactive tool to compare different census tracts within a State. First, choose a State and then add different SDoH variables to start the comparison. You will be able to use the sliders to adjust each variable. Once you finish setting up the variables, press &quot; Search&quot; to see the results in the map.
          </p>

          <label className="mt-[64px] flex items-center pl-5 text-[40px] font-light leading-[60px]">
            <span>Raw Slider Numbers</span>
            <input
              type="checkbox"
              role="switch"
              checked={percentile}
              onChange={(e) => setPercentile(e.target.checked)}
              className="relative ml-[42px] mr-[70px] mt-1 h-[35px] w-[85px] appearance-none rounded-full bg-[#9e9e9e] after:absolute after:-top-[7px] after:left-0 after:size-[50px] after:rounded-full after:bg-white after:shadow-[0_4px_6px_rgba(0,0,0,0.4)] after:content-[''] checked:bg-[#78aca5] checked:after:left-[43px] checked:after:bg-[#00695c]"
            />
            <span>Percentile Groups</span>
          </label>

          <div className="mt-[65px] flex gap-10">
            <Picker label="State" options={["New Jersey", "Pennsylvania"]} />
            <Picker label="Variable" options={["Income", "Education"]} />
          </div>

          <button type="button" className="mt-[70px] h-[91px] shrink-0 rounded-[10px] bg-[#00695c] px-11 pt-1 text-[36px] font-light uppercase text-white shadow-[0_6px_6px_rgba(0,0,0,0.25),0_2px_12px_rgba(0,0,0,0.2)]">
            Add search variable
          </button>

          <section className="relative mt-[50px] min-h-0 w-full flex-1 overflow-hidden">
            <RoadMap />
            <div className="absolute left-[26px] top-[26px] flex w-[84px] flex-col overflow-hidden rounded-[10px] border-4 border-black/20 bg-white bg-clip-padding">
              <button type="button" aria-label="Zoom in" className="flex h-[75px] items-center justify-center border-b-2 border-[#ccc]">
                <svg viewBox="0 0 30 30" className="size-[30px]"><path d="M15 0V30M0 15H30" stroke="#000" strokeWidth="5" /></svg>
              </button>
              <button type="button" aria-label="Zoom out" className="flex h-[75px] items-center justify-center">
                <svg viewBox="0 0 30 30" className="size-[30px]"><path d="M0 15H30" stroke="#000" strokeWidth="5" /></svg>
              </button>
            </div>
          </section>
        </main>
      </div>
    </div>
  );
}
